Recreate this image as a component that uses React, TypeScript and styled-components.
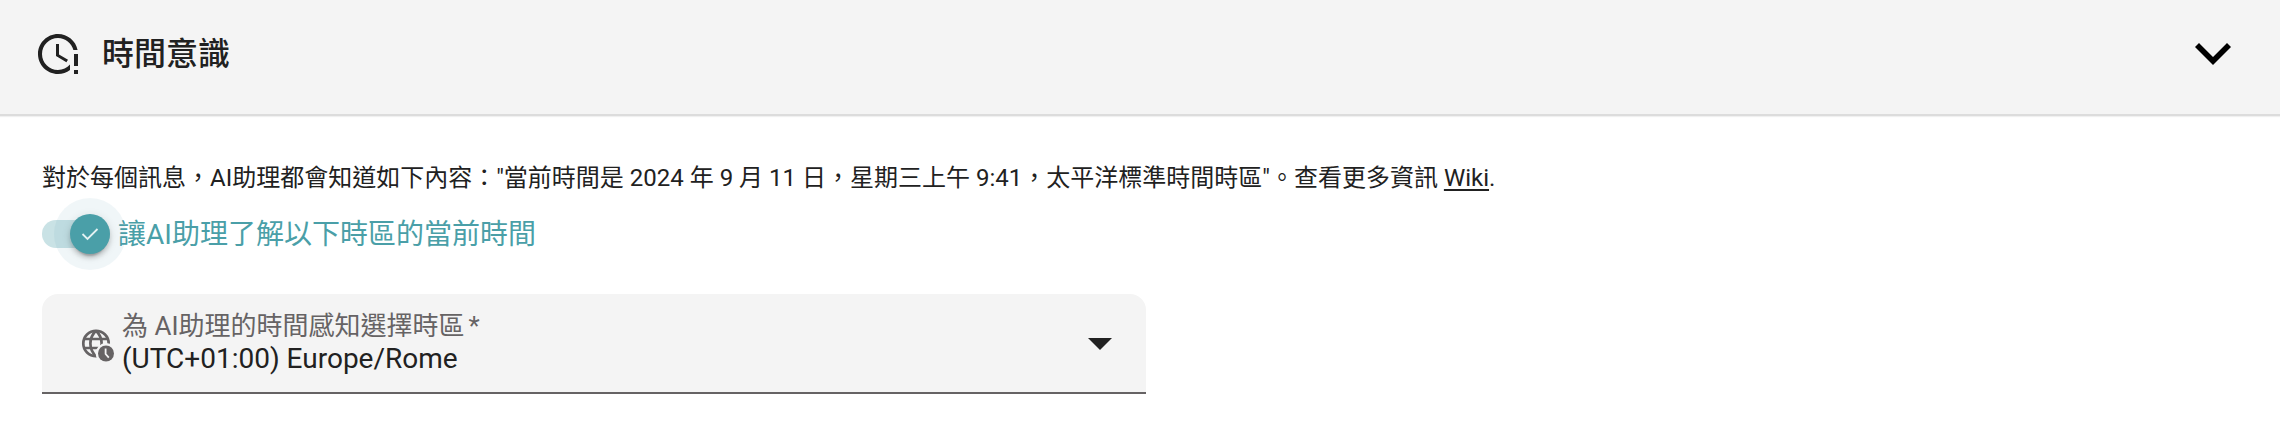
import React, { useState } from "react";
import styled, { createGlobalStyle } from "styled-components";

const GlobalStyle = createGlobalStyle`
  *, *::before, *::after { box-sizing: border-box; }
  body {
    margin: 0;
    background: #fff;
    color: #212121;
    font-family: Roboto, "Noto Sans CJK TC", sans-serif;
  }
`;

const Header = styled.button`
  display: flex;
  align-items: center;
  gap: 20px;
  width: 100%;
  padding: 30px 42px 36px 34px;
  border: 0;
  border-bottom: 2px solid #dcdcdc;
  background: #f4f4f4;
  color: inherit;
  font: inherit;
  text-align: left;
  cursor: pointer;
  box-shadow: 0 1px 1px rgba(0, 0, 0, 0.06);
`;

const Title = styled.span`
  flex: 1;
  font-size: 32px;
  line-height: 48px;
  font-weight: 500;
`;

const Chevron = styled.svg<{ $open: boolean }>`
  width: 50px;
  height: 48px;
  transform: ${(p) => (p.$open ? "none" : "rotate(-90deg)")};
`;

const Body = styled.section`
  padding: 44px 30px 46px 42px;
`;

const Description = styled.p`
  margin: 0;
  font-size: 24px;
  line-height: 36px;
`;

const WikiLink = styled.a`
  color: inherit;
  text-decoration: underline;
  text-decoration-thickness: 2px;
  text-underline-offset: 3px;
`;

const ToggleRow = styled.div`
  display: flex;
  align-items: center;
  gap: 8px;
  height: 40px;
  margin: 18px 0 40px;
`;

const ToggleBox = styled.span`
  position: relative;
  display: flex;
  align-items: center;
  width: 68px;
  height: 40px;
`;

const ToggleInput = styled.input`
  appearance: none;
  width: 68px;
  height: 28px;
  margin: 0;
  border-radius: 14px;
  background: #c9e2e5;
  outline: none;
  cursor: pointer;

  &:not(:checked) {
    background: #d0d0d0;
  }
`;

const Thumb = styled.span<{ $on: boolean }>`
  position: absolute;
  top: 0;
  ${(p) => (p.$on ? "right: 0;" : "left: 0;")}
  width: 40px;
  height: 40px;
  border-radius: 50%;
  background: ${(p) => (p.$on ? "#4a9fa8" : "#fafafa")};
  pointer-events: none;
  box-shadow:
    0 6px 2px -4px rgba(0, 0, 0, 0.2),
    0 4px 4px 0 rgba(0, 0, 0, 0.14),
    0 2px 10px 0 rgba(0, 0, 0, 0.12),
    0 0 0 16px rgba(70, 140, 168, 0.08);
`;

const ToggleLabel = styled.label`
  padding-top: 2px;
  color: #4a9fa8;
  font-size: 28px;
  line-height: 40px;
  cursor: pointer;
`;

const Field = styled.div`
  display: flex;
  align-items: center;
  width: 50%;
  height: 100px;
  padding: 0 34px;
  border-bottom: 2px solid #666364;
  border-radius: 16px 16px 0 0;
  background: #f4f4f4;
`;

const FieldIcon = styled.svg`
  flex: none;
  width: 46px;
  height: 44px;
`;

const FieldText = styled.div`
  display: flex;
  flex: 1;
  flex-direction: column;
  padding-bottom: 2px;
`;

const FieldLabel = styled.label`
  color: #666364;
  font-size: 26px;
  line-height: 34px;
`;

const Required = styled.span`
  margin-left: 4px;
`;

const Select = styled.select`
  appearance: none;
  width: 100%;
  height: 32px;
  margin: 0;
  padding: 0;
  border: 0;
  outline: none;
  background: transparent;
  color: inherit;
  font: inherit;
  font-size: 28px;
  line-height: 32px;
  cursor: pointer;
`;

const Caret = styled.svg`
  flex: none;
  width: 24px;
  height: 14px;
`;

const ClockAlertIcon = () => (
  <svg width="48" height="48" viewBox="0 0 24 24" fill="#212121" aria-hidden="true">
    <path d="M11 7V13L16.2 16.1L17 14.9L12.5 12.2V7H11M20 12V18H22V12H20M20 20V22H22V20H20M18 20C16.3 21.3 14.3 22 12 22C6.5 22 2 17.5 2 12S6.5 2 12 2C16.8 2 20.9 5.4 21.8 10H19.7C18.8 6.6 15.7 4 12 4C7.6 4 4 7.6 4 12S7.6 20 12 20C14.4 20 16.5 18.9 18 17.3V20Z" />
  </svg>
);

const GlobeClockIcon = () => (
  <FieldIcon viewBox="0 0 46 44" aria-hidden="true">
    <g fill="none" stroke="#666364" strokeWidth="2.7">
      <circle cx="20" cy="22.5" r="12.7" />
      <path d="M8 18H32M8 27H32" />
      <path d="M20 9.8C12.5 17 12.5 28 20 35.2M20 9.8C27.5 17 27.5 28 20 35.2" />
    </g>
    <circle cx="30" cy="32.5" r="10.4" fill="#f4f4f4" />
    <circle cx="30" cy="32.5" r="8" fill="#666364" />
    <path d="M29.6 27.6V33L32.8 36.6" fill="none" stroke="#f4f4f4" strokeWidth="1.8" />
  </FieldIcon>
);

export default function App() {
  const [open, setOpen] = useState(true);
  const [enabled, setEnabled] = useState(true);

  return (
    <main>
      <GlobalStyle />
      <Header type="button" aria-expanded={open} onClick={() => setOpen(!open)}>
        <ClockAlertIcon />
        <Title>時間意識</Title>
        <Chevron $open={open} viewBox="0 0 50 48" aria-hidden="true">
          <path d="M11 13L25 27L39 13L43 17L25 35L7 17Z" fill="#000" />
        </Chevron>
      </Header>
      {open && (
        <Body>
          <Description>
            對於每個訊息，AI助理都會知道如下內容："當前時間是 2024 年 9 月 11 日，星期三上午
            9:41，太平洋標準時間時區"。查看更多資訊 <WikiLink href="#wiki">Wiki</WikiLink>.
          </Description>
          <ToggleRow>
            <ToggleBox>
              <ToggleInput
                id="time-awareness"
                type="checkbox"
                role="switch"
                checked={enabled}
                onChange={(e) => setEnabled(e.target.checked)}
              />
              <Thumb $on={enabled}>
                <svg width="40" height="40" viewBox="0 0 40 40" aria-hidden="true">
                  {enabled && (
                    <path d="M12.5 20L17.5 25L27.5 15" fill="none" stroke="#e4f1f2" strokeWidth="1.8" />
                  )}
                </svg>
              </Thumb>
            </ToggleBox>
            <ToggleLabel htmlFor="time-awareness">讓AI助理了解以下時區的當前時間</ToggleLabel>
          </ToggleRow>
          <Field>
            <GlobeClockIcon />
            <FieldText>
              <FieldLabel htmlFor="timezone">
                為 AI助理的時間感知選擇時區<Required>*</Required>
              </FieldLabel>
              <Select id="timezone" required defaultValue="Europe/Rome">
                <option value="Europe/Rome">(UTC+01:00) Europe/Rome</option>
              </Select>
            </FieldText>
            <Caret viewBox="0 0 24 14" aria-hidden="true">
              <path d="M0 2H24L12 14Z" fill="#212121" />
            </Caret>
          </Field>
        </Body>
      )}
    </main>
  );
}
